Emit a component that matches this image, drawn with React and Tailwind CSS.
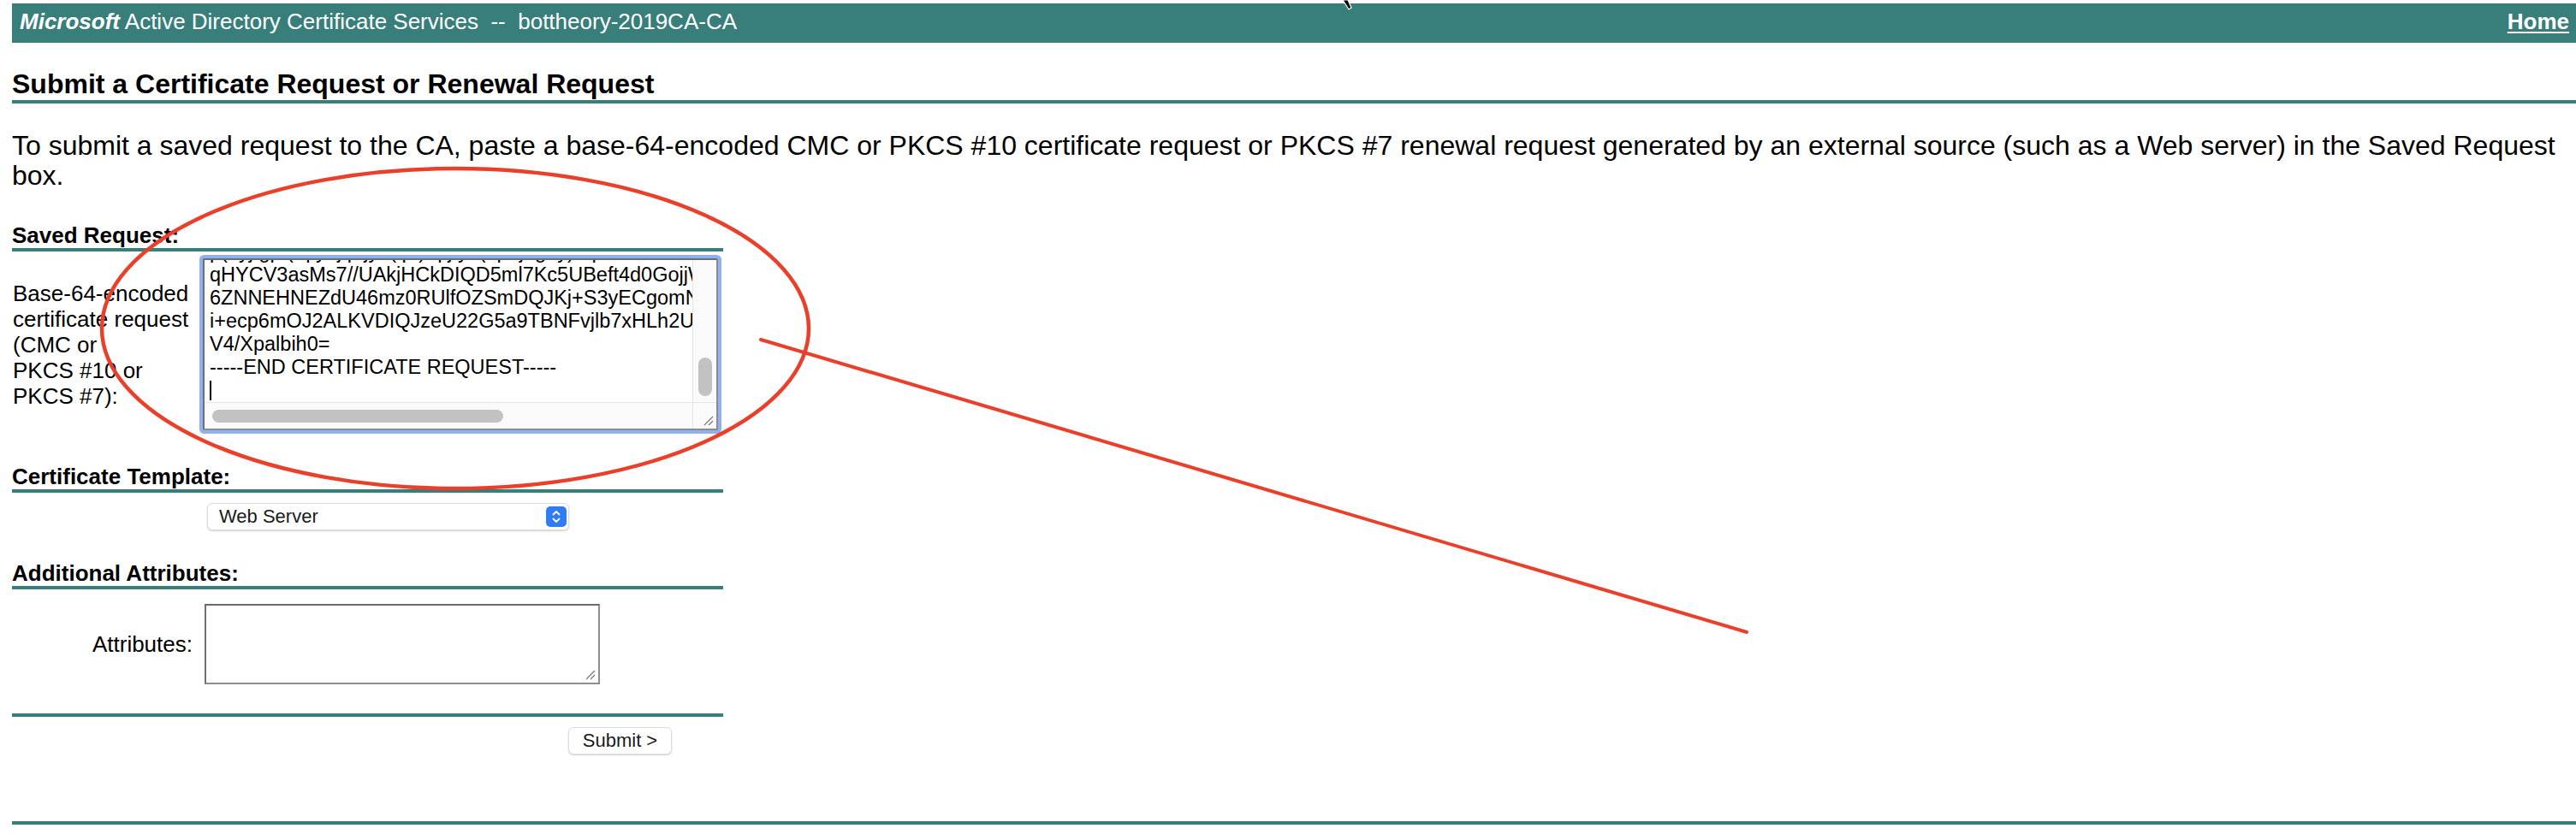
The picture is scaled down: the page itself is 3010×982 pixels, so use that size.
import React from "react";

function Grip() {
  return (
    <svg width="14" height="14" viewBox="0 0 14 14" className="absolute bottom-[3px] right-[3px]">
      <line x1="3" y1="13" x2="13" y2="3" stroke="#7a7a7a" strokeWidth="1.3" />
      <line x1="8" y1="13" x2="13" y2="8" stroke="#7a7a7a" strokeWidth="1.3" />
    </svg>
  );
}

function SectionHead({ children, className = "" }) {
  return (
    <div
      className={
        "w-[831px] border-b-[4px] border-[#387e7b] text-[26px] font-bold leading-[30px] " +
        className
      }
    >
      {children}
    </div>
  );
}

export default function App() {
  const lines = [
    "p(  yj gp ( q y  j p jy  ( p ) q j y  (  p  j  g  y)  q",
    "qHYCV3asMs7//UAkjHCkDIQD5ml7Kc5UBeft4d0GojjWxR2Hk",
    "6ZNNEHNEZdU46mz0RUlfOZSmDQJKj+S3yECgomNIpQ3vTz",
    "i+ecp6mOJ2ALKVDIQJzeU22G5a9TBNFvjlb7xHLh2Uj9Kd",
    "V4/Xpalbih0=",
    "-----END CERTIFICATE REQUEST-----",
  ];
  return (
    <div className="relative min-h-screen overflow-hidden bg-white pl-[14px] pt-[4px] font-['Liberation_Sans',Arial,sans-serif] text-black">
      {/* Header bar */}
      <div className="flex h-[46px] items-start justify-between bg-[#387e7b] pl-[9px] pr-[8px] pt-[6px] text-[26px] leading-[30px] text-white">
        <span className="whitespace-pre">
          <b>
            <i>Microsoft</i>
          </b>
          {" Active Directory Certificate Services \u00a0--\u00a0 bottheory-2019CA-CA"}
        </span>
        <a className="font-bold underline decoration-[2px] underline-offset-[3px]">Home</a>
      </div>

      {/* Title */}
      <div className="mt-[30px] border-b-[4px] border-[#387e7b] text-[32px] font-bold leading-[37px]">
        Submit a Certificate Request or Renewal Request
      </div>

      {/* Intro paragraph */}
      <p className="mt-[32px] pr-[14px] text-[32px] leading-[35px]">
        To submit a saved request to the CA, paste a base-64-encoded CMC or PKCS #10 certificate request or PKCS #7
        renewal request generated by an external source (such as a Web server) in the Saved Request box.
      </p>

      {/* Saved Request */}
      <SectionHead className="mt-[37px]">Saved Request:</SectionHead>

      <div className="flex items-center pt-[8px]">
        <div className="w-[223px] pl-[1px] text-[26px] leading-[30px]">
          Base-64-encoded
          <br />
          certificate request
          <br />
          (CMC or
          <br />
          PKCS #10 or
          <br />
          PKCS #7):
        </div>
        <div className="relative h-[201px] w-[602px] rounded-[2px] border-2 border-[#6e6e6e] border-b-[#8c8c8c] border-r-[#8c8c8c] bg-white ring-4 ring-[#8fb1f1]">
          <div className="grid h-full w-full grid-cols-[minmax(0,1fr)_28px] grid-rows-[minmax(0,1fr)_31px]">
            <div className="min-w-0 overflow-hidden pl-[6px]">
              <div className="-mt-[23px] whitespace-pre text-[23.5px] leading-[27px]">
                {lines.map((l, i) => (
                  <div key={i}>{l}</div>
                ))}
                <div className="h-[27px] pt-[2px]">
                  <div className="h-[23px] w-[2px] bg-black" />
                </div>
              </div>
            </div>
            <div className="flex flex-col items-center justify-end border-l border-[#e6e6e6] bg-[#fafafa] pb-[7px]">
              <div className="h-[45px] w-[16px] rounded-full bg-[#c2c2c2]" />
            </div>
            <div className="flex min-w-0 items-center border-t border-[#e6e6e6] bg-[#fafafa] pl-[9px]">
              <div className="h-[15px] w-[340px] rounded-full bg-[#c2c2c2]" />
            </div>
            <div className="relative border-l border-t border-[#e6e6e6] bg-[#fafafa]">
              <Grip />
            </div>
          </div>
        </div>
      </div>

      {/* Certificate Template */}
      <SectionHead className="mt-[39px]">Certificate Template:</SectionHead>

      <div className="ml-[228px] mt-[12px] flex h-[32px] w-[423px] items-center justify-between rounded-[6px] border border-[#dcdcdc] bg-white pl-[13px] pr-[2px] text-[22px] leading-[26px] text-[#1a1a1a] shadow-[0_1px_2px_rgba(0,0,0,0.18)]">
        <span>Web Server</span>
        <div className="flex h-[24px] w-[24px] items-center justify-center rounded-[5px] bg-[#2f7cf6]">
          <svg width="12" height="18" viewBox="0 0 12 18">
            <polyline points="2.5,6.5 6,3 9.5,6.5" fill="none" stroke="white" strokeWidth="1.8" strokeLinecap="round" strokeLinejoin="round" />
            <polyline points="2.5,11.5 6,15 9.5,11.5" fill="none" stroke="white" strokeWidth="1.8" strokeLinecap="round" strokeLinejoin="round" />
          </svg>
        </div>
      </div>

      {/* Additional Attributes */}
      <SectionHead className="mt-[35px]">Additional Attributes:</SectionHead>

      <div className="mt-[17px] flex items-center">
        <div className="w-[225px] pr-[14px] text-right text-[26px] leading-[30px]">Attributes:</div>
        <div className="relative h-[94px] w-[462px] border-2 border-[#8e8e8e] border-l-[#707070] border-t-[#6a6a6a] bg-white">
          <Grip />
        </div>
      </div>

      <div className="mt-[34px] w-[831px] border-b-[4px] border-[#387e7b]" />

      <div className="ml-[650px] mt-[12px] flex h-[32px] w-[121px] items-center justify-center rounded-[6px] border border-[#dcdcdc] bg-white text-[22px] leading-[26px] text-[#1a1a1a] shadow-[0_1px_2px_rgba(0,0,0,0.18)]">
        Submit &gt;
      </div>

      <div className="mt-[78px] border-b-[4px] border-[#387e7b]" />

      {/* Red annotation overlay */}
      <svg
        className="pointer-events-none absolute left-0 top-0"
        width="3010"
        height="982"
        viewBox="0 0 3010 982"
      >
        <ellipse cx="532" cy="384" rx="413" ry="187" fill="none" stroke="#e8402b" strokeWidth="4.5" />
        <line x1="889" y1="397" x2="2041" y2="739" stroke="#e8402b" strokeWidth="4" strokeLinecap="round" />
      </svg>

      {/* Mouse pointer tail at top */}
      <svg className="pointer-events-none absolute left-[1566px] top-0" width="22" height="14" viewBox="0 0 22 14">
        <polygon points="3,0 9,0 13,9 10,11" fill="black" stroke="white" strokeWidth="1.2" />
      </svg>
    </div>
  );
}
